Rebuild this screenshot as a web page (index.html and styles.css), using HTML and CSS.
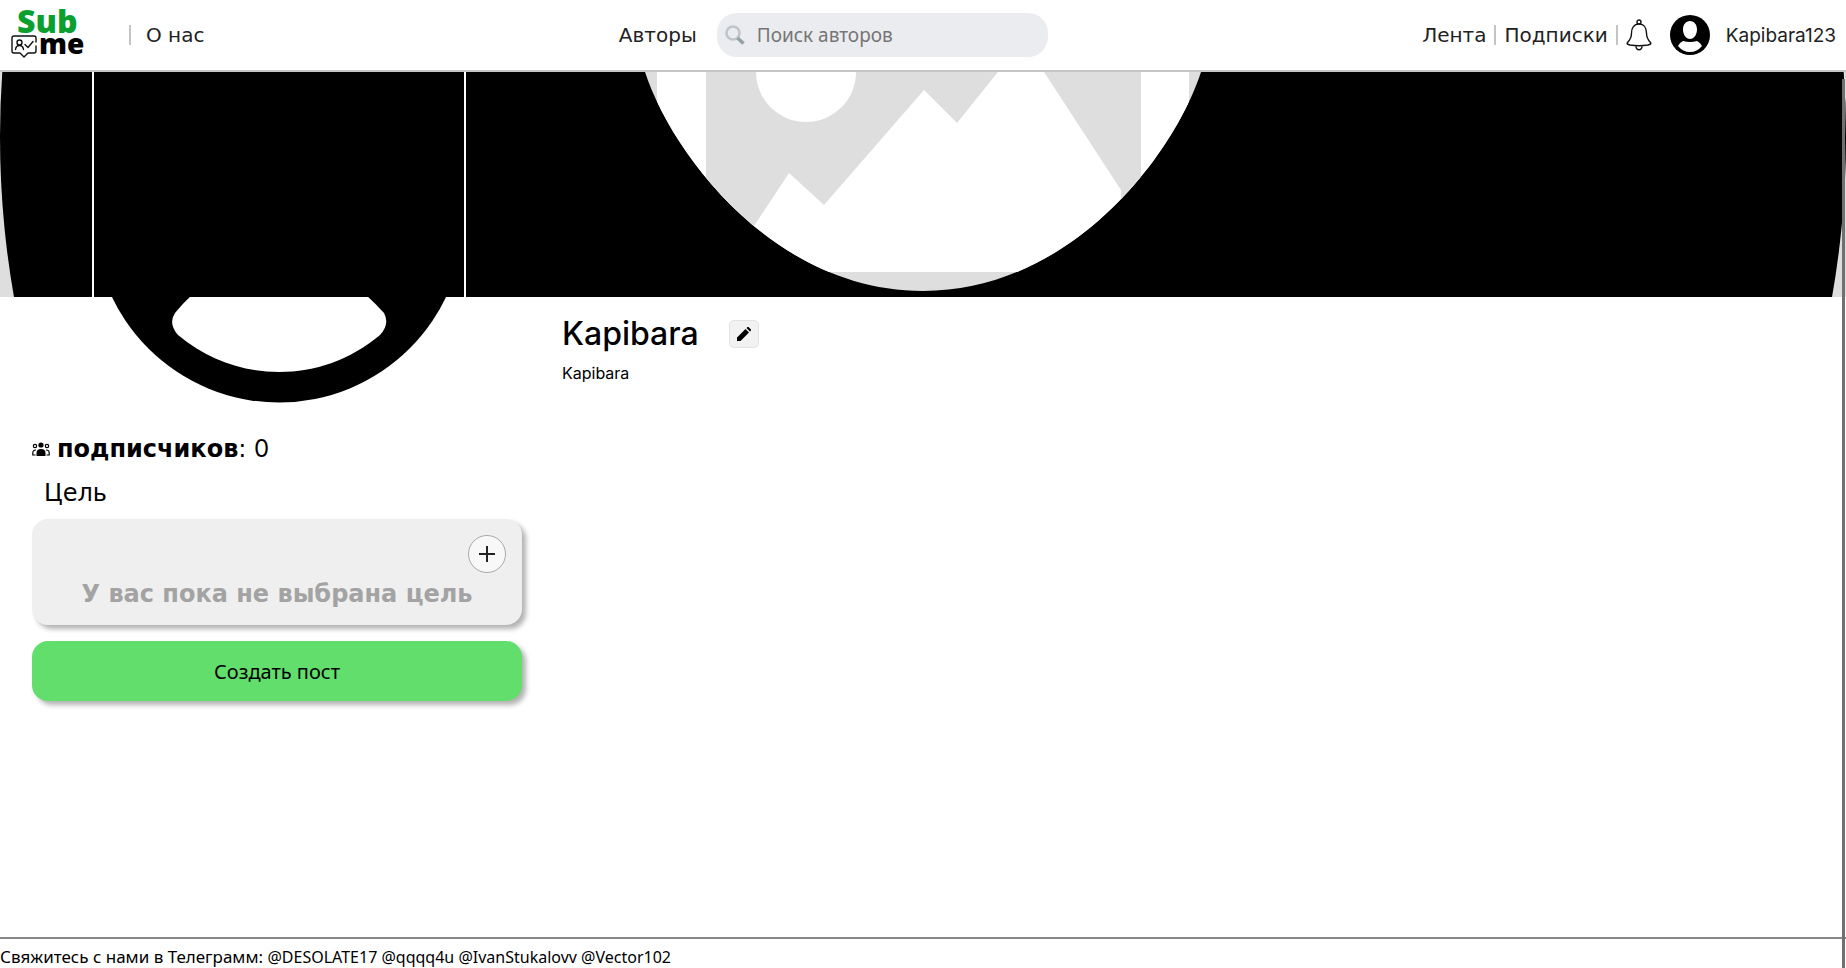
FILE: index.html
```html
<!DOCTYPE html>
<html lang="ru">
<head>
<meta charset="utf-8">
<title>SubMe</title>
<link rel="stylesheet" href="styles.css">
</head>
<body>
<header class="header">
  <nav class="nav nav-left">
    <a class="logo" href="#" aria-label="SubMe">
      <span class="logo-sub">Sub</span>
      <span class="logo-row">
        <svg class="logo-card" viewBox="0 0 26 24" fill="none" stroke="#111" stroke-width="1.4" stroke-linejoin="round" stroke-linecap="round"><path d="M25 7V3Q25 1 23 1H3Q1 1 1 3V16Q1 18 3 18H9L13 22L17 18H23Q25 18 25 16V11"/><circle cx="8.500" cy="7.500" r="2.500"/><path d="M4.500 14.500Q5 10.500 8.500 10.500Q12 10.500 12.500 14.500M14 9.500L17 12.500L22 6.500"/></svg>
        <span class="logo-me">me</span>
      </span>
    </a>
    <span class="divider"></span>
    <a class="link" href="#">О нас</a>
  </nav>
  <div class="nav nav-center">
    <a class="link" href="#">Авторы</a>
    <label class="search">
      <svg class="search-icon" viewBox="0 0 20 20" fill="none"><circle cx="8" cy="8" r="6.500" stroke="#bfc5c9" stroke-width="2.600"/><path d="M12.500 13L18.500 18.500" stroke="#91a3a3" stroke-width="3.600"/></svg>
      <input class="search-input" type="text" placeholder="Поиск авторов" aria-label="Поиск авторов">
    </label>
  </div>
  <nav class="nav nav-right">
    <a class="link" href="#">Лента</a>
    <span class="divider"></span>
    <a class="link" href="#">Подписки</a>
    <span class="divider"></span>
    <button class="bell" aria-label="Уведомления"><svg viewBox="0 0 26 32" fill="none" stroke="#111" stroke-width="1.400"><circle cx="13" cy="3" r="2"/><path d="M13 5C8 5 5.500 9 5.500 14C5.500 19 4 21 1.500 23.500C.5 25 2 25.500 4 26Q13 27.500 22 26C24 25.500 25.500 25 24.500 23.500C22 21 20.500 19 20.500 14C20.500 9 18 5 13 5ZM10 27C10 32 16 32 16 27"/></svg></button>
    <a class="user" href="#">
      <svg class="user-icon" viewBox="0 0 40 40"><circle cx="20" cy="20" r="20"/><path fill="#fff" d="M20 6C24 6 27 9.500 27 14.500C27 19.500 24 24 20 24C16 24 13 19.500 13 14.500C13 9.500 16 6 20 6ZM13 26Q20 28 27 26Q31 28 32 31Q27 37 20 37Q13 37 8 31Q9 28 13 26Z"/></svg>
      <span class="latin user-name">Kapibara123</span>
    </a>
  </nav>
</header>
<main class="main">
  <svg class="cover" viewBox="0 72 1846 225" preserveAspectRatio="xMidYMid slice">
    <rect y="72" width="1846" height="225" fill="#dedede"/>
    <circle cx="923" cy="137" r="923"/>
    <clipPath id="head"><path d="M645 72C671 152 773 291 923 291C1073 291 1175 152 1201 72Z"/></clipPath>
    <g clip-path="url(#head)">
      <rect x="640" y="72" width="570" height="225" fill="#dedede"/>
      <rect x="657" y="72" width="532" height="200" fill="#fff"/>
      <path fill="#dedede" d="M706 72H998L957 123L924 90L824 205L789 173L754 226V272H706ZM1044 72H1141V272H1121V190Z"/>
      <circle cx="806" cy="72" r="50" fill="#fff"/>
    </g>
    <path d="M93 72V297M465 72V297" stroke="#fff" stroke-width="2"/>
  </svg>
  <div class="profile">
    <aside class="side">
      <svg class="avatar" viewBox="92 297 374 106"><clipPath id="below"><rect x="92" y="297" width="374" height="106"/></clipPath><g clip-path="url(#below)"><circle cx="279" cy="217.500" r="185"/><path fill="#fff" d="M191 296Q183 303 175 313Q168 324 178 335C208 360 243 372 279 372C315 372 350 360 380 335Q390 324 384 313Q375 303 367 296Z"/></g></svg>
      <p class="followers"><svg class="people" viewBox="0 0 18 14"><circle cx="9" cy="3" r="2.600"/><path d="M4.500 14V11Q4.500 7 9 7Q13.500 7 13.500 11V14Z"/><g fill="none" stroke="#000" stroke-width="1.200"><circle cx="3" cy="4" r="1.700"/><circle cx="15" cy="4" r="1.700"/><path d="M3.500 13H.8V11Q.8 8 4 8M14.500 13H17.200V11Q17.200 8 14 8"/></g></svg><span><b>подписчиков</b>: <span class="latin">0</span></span></p>
      <h2 class="goal-title">Цель</h2>
      <section class="goal">
        <button class="add" aria-label="Добавить цель"><svg viewBox="0 0 16 16" stroke="#222" stroke-width="2"><path d="M8 0V16M0 8H16"/></svg></button>
        <p class="goal-text">У вас пока не выбрана цель</p>
      </section>
      <button class="create">Создать пост</button>
    </aside>
    <section class="about">
      <div class="name-row">
        <h1 class="name latin">Kapibara</h1>
        <button class="edit" aria-label="Редактировать"><svg viewBox="0 0 14 14"><path d="M0 14V10.500L8.500 2L12 5.500L3.500 14ZM9.500 1L10.500 0Q11 -.3 11.500 0L14 2.500Q14.300 3 14 3.500L13 4.500Z"/></svg></button>
      </div>
      <p class="bio latin">Kapibara</p>
    </section>
  </div>
</main>
<footer class="footer">Свяжитесь с нами в Телеграмм: <span class="contacts">@DESOLATE17 @qqqq4u @IvanStukalovv @Vector102</span></footer>
<div class="scroll-thumb"></div>
</body>
</html>
```
FILE: styles.css
```css
* { box-sizing: border-box; }
body {
  margin: 0;
  min-height: 100vh;
  display: flex;
  flex-direction: column;
  font-family: "DejaVu Sans", sans-serif;
  color: #000;
  background: #fff;
}
h1, h2, p { margin: 0; font-weight: 400; }
button { padding: 0; border: 0; background: none; font: inherit; color: inherit; }
svg { display: block; }
.latin { font-family: Inter, "Noto Sans", sans-serif; }
.header {
  height: 72px;
  display: flex;
  justify-content: space-between;
  align-items: center;
  border-bottom: 2px solid #c4c4c4;
  font-size: 20px;
  color: #222;
}
.nav { display: flex; align-items: center; }
.link, .user { color: inherit; text-decoration: none; }
.nav-left { padding-left: 11px; padding-right: 40px; }
.logo { display: block; width: 76px; margin-right: 42px; padding-bottom: 4px; text-decoration: none; font-family: "Open Sans", sans-serif; font-weight: 800; }
.logo-sub { display: block; padding-left: 6px; font-size: 32px; line-height: 28px; color: #0a9f2f; }
.logo-row { display: flex; align-items: flex-start; gap: 2px; }
.logo-card { width: 26px; height: 24px; flex: none; }
.logo-me { font-size: 28px; line-height: 16px; color: #000; }
.divider { width: 2px; height: 20px; background: #c4c4c4; }
.nav-left .link { margin-left: 15px; }
.nav-center { gap: 20px; }
.search {
  width: 331px;
  height: 44px;
  display: flex;
  align-items: center;
  gap: 12px;
  padding: 0 8px;
  border-radius: 20px;
  background: #ebecf0;
}
.search-icon { width: 20px; height: 20px; flex: none; }
.search-input { min-width: 0; flex: 1; padding: 0; border: 0; outline: 0; background: none; font-family: "Noto Sans", sans-serif; font-size: 19px; }
.search-input::placeholder { color: #757575; }
.nav-right { justify-content: flex-end; gap: 8px; padding-right: 10px; }
.bell { width: 26px; height: 32px; }
.user { display: flex; align-items: center; gap: 16px; margin-left: 10px; }
.user-icon { width: 40px; height: 40px; }
.user-name { font-size: 19px; }
.main { flex: 1; }
.cover { width: 100%; }
.profile { display: flex; gap: 40px; padding-left: 32px; }
.side { width: 490px; }
.avatar { width: 374px; margin-left: 60px; }
.followers { display: flex; align-items: center; gap: 7px; margin-top: 28px; font-size: 24px; line-height: 36px; }
.people { width: 18px; height: 14px; }
.goal-title { padding-left: 12px; margin: 8px 0; font-size: 24px; line-height: 36px; }
.goal {
  height: 106px;
  display: flex;
  flex-direction: column;
  padding: 16px;
  border-radius: 16px;
  background: #efefef;
  box-shadow: 4px 4px 5px rgba(0, 0, 0, 0.3);
}
.add {
  width: 38px;
  height: 38px;
  flex: none;
  display: grid;
  place-items: center;
  align-self: flex-end;
  border: 1px solid #aaa;
  border-radius: 50%;
  background: #f8f8f8;
}
.add svg { width: 16px; height: 16px; }
.goal-text { text-align: center; font-size: 24px; line-height: 42px; font-weight: 700; color: #a3a3a3; }
.create {
  width: 100%;
  height: 60px;
  margin-top: 16px;
  border-radius: 16px;
  background: #61de6c;
  box-shadow: 4px 4px 5px rgba(0, 0, 0, 0.3);
  font-family: "Noto Sans", sans-serif;
  font-size: 20px;
}
.about { padding-top: 16px; }
.name-row { display: flex; align-items: center; gap: 30px; }
.name { font-size: 32px; line-height: 42px; font-weight: 500; }
.edit {
  width: 30px;
  height: 28px;
  display: grid;
  place-items: center;
  border: 1px solid #e2e2e2;
  border-radius: 5px;
  background: #f2f2f2;
}
.edit svg { width: 14px; height: 14px; }
.bio { margin-top: 8px; font-size: 16px; line-height: 20px; }
.footer { height: 31px; border-top: 2px solid #888; font-family: "Noto Sans", sans-serif; font-size: 17px; line-height: 36px; }
.contacts { font-size: 16px; }
.scroll-thumb { position: fixed; top: 79px; right: 1px; bottom: 0; width: 3px; background: #707070; }
```
